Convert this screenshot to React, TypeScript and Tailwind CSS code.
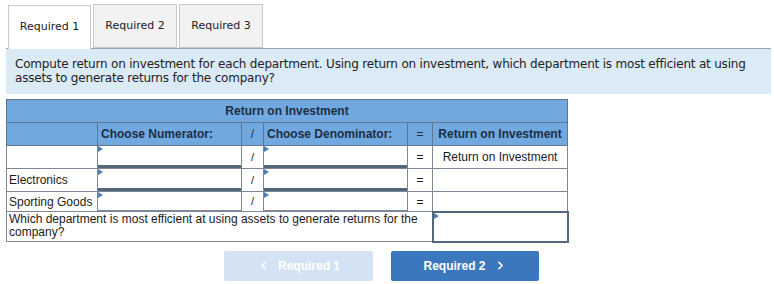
import { ChevronLeft, ChevronRight } from 'lucide-react';

const tabs = ['Required 1', 'Required 2', 'Required 3'];

function Pick({ thick = true }: { thick?: boolean }) {
  return (
    <div
      className={`relative h-full w-full bg-white ${thick ? 'border-b-[3px] border-[#55687b]' : 'border-b border-[#7d8a97]'}`}
    >
      <span className="absolute left-0 top-0 h-0 w-0 border-y-[3px] border-l-[5px] border-y-transparent border-l-[#4a7fb5]" />
    </div>
  );
}

const rows = [
  { label: '', result: 'Return on Investment', thick: true },
  { label: 'Electronics', result: '', thick: true },
  { label: 'Sporting Goods', result: '', thick: false },
];

export default function App() {
  const cell = 'border border-[#7b8896] p-0';
  return (
    <div className="w-[774px] h-[284px] bg-white overflow-hidden">
      {/* tabs */}
      <div className="flex items-end pl-[8px] pt-[4px] font-['DejaVu_Sans',sans-serif] text-[11px] text-[#222]">
        {tabs.map((t, i) => (
          <div
            key={t}
            className={`flex h-[44px] items-center justify-center border border-[#c8c8c8] ${
              i === 0
                ? 'relative z-10 w-[83px] -mb-px border-b-0 bg-white'
                : 'w-[84px] bg-[#f2f2f2]'
            } ${i === 1 ? 'ml-[2px]' : ''} ${i === 2 ? 'ml-[2px]' : ''}`}
          >
            {t}
          </div>
        ))}
      </div>

      <div className="ml-[6px] w-[765px] border-t border-[#9aa7b3] bg-[#dbeaf7] px-[9px] pt-[8px] pb-[9px] font-['DejaVu_Sans',sans-serif] text-[12px] leading-[14px] tracking-[-0.2px] text-[#222]">
        Compute return on investment for each department. Using return on investment, which department is most efficient at using assets to generate returns for the company?
      </div>

      {/* table */}
      <table className="ml-[6px] mt-[5px] w-[561px] table-fixed border-collapse border border-[#6b7886] font-['Liberation_Sans',Arial,sans-serif] text-[12px] text-[#1b1b1b]">
        <colgroup>
          <col className="w-[91px]" />
          <col className="w-[144px]" />
          <col className="w-[22px]" />
          <col className="w-[144px]" />
          <col className="w-[25px]" />
          <col className="w-[135px]" />
        </colgroup>
        <tbody>
          <tr className="h-[23px] bg-[#71a8df] font-bold text-[#1c2f45]">
            <td colSpan={6} className="border border-[#5f7890] text-center">
              Return on Investment
            </td>
          </tr>
          <tr className="h-[23px] bg-[#71a8df] font-bold text-[#1c2f45]">
            <td className="border border-[#5f7890]" />
            <td className="border border-[#5f7890] pl-[3px]">Choose Numerator:</td>
            <td className="border border-[#5f7890] text-center font-normal">/</td>
            <td className="border border-[#5f7890] pl-[3px]">Choose Denominator:</td>
            <td className="border border-[#5f7890] text-center font-normal">=</td>
            <td className="border border-[#5f7890] text-center">Return on Investment</td>
          </tr>
          {rows.map((r, i) => (
            <tr key={i} className={i === 2 ? 'h-[20px]' : 'h-[23px]'}>
              <td className={`${cell} pl-[2px] whitespace-nowrap`}>{r.label}</td>
              <td className={`${cell} h-[inherit]`}>
                <Pick thick={r.thick} />
              </td>
              <td className={`${cell} text-center text-[11px]`}>/</td>
              <td className={`${cell} h-[inherit]`}>
                <Pick thick={r.thick} />
              </td>
              <td className={`${cell} text-center`}>=</td>
              <td className={`${cell} text-center`}>{r.result}</td>
            </tr>
          ))}
          <tr className="h-[30px]">
            <td colSpan={5} className={`${cell} pl-[2px] pr-[4px] align-top leading-[13px] pt-[1px]`}>
              Which department is most efficient at using assets to generate returns for the company?
            </td>
            <td className="border-2 border-[#55687b] p-0 align-top">
              <div className="relative h-[27px] bg-white">
                <span className="absolute left-0 top-0 h-0 w-0 border-y-[3px] border-l-[5px] border-y-transparent border-l-[#4a7fb5]" />
              </div>
            </td>
          </tr>
        </tbody>
      </table>

      {/* nav buttons */}
      <div className="mt-[8px] flex gap-[18px] pl-[224px] font-['Liberation_Sans',Arial,sans-serif] text-[12px] font-bold text-white">
        <button className="flex h-[30px] w-[149px] items-center justify-center gap-[8px] rounded-[2px] bg-[#d3e3f3]">
          <ChevronLeft size={13} strokeWidth={3} />
          Required 1
        </button>
        <button className="flex h-[30px] w-[148px] items-center justify-center gap-[8px] rounded-[2px] bg-[#3a77bd]">
          Required 2
          <ChevronRight size={13} strokeWidth={3} />
        </button>
      </div>
    </div>
  );
}
